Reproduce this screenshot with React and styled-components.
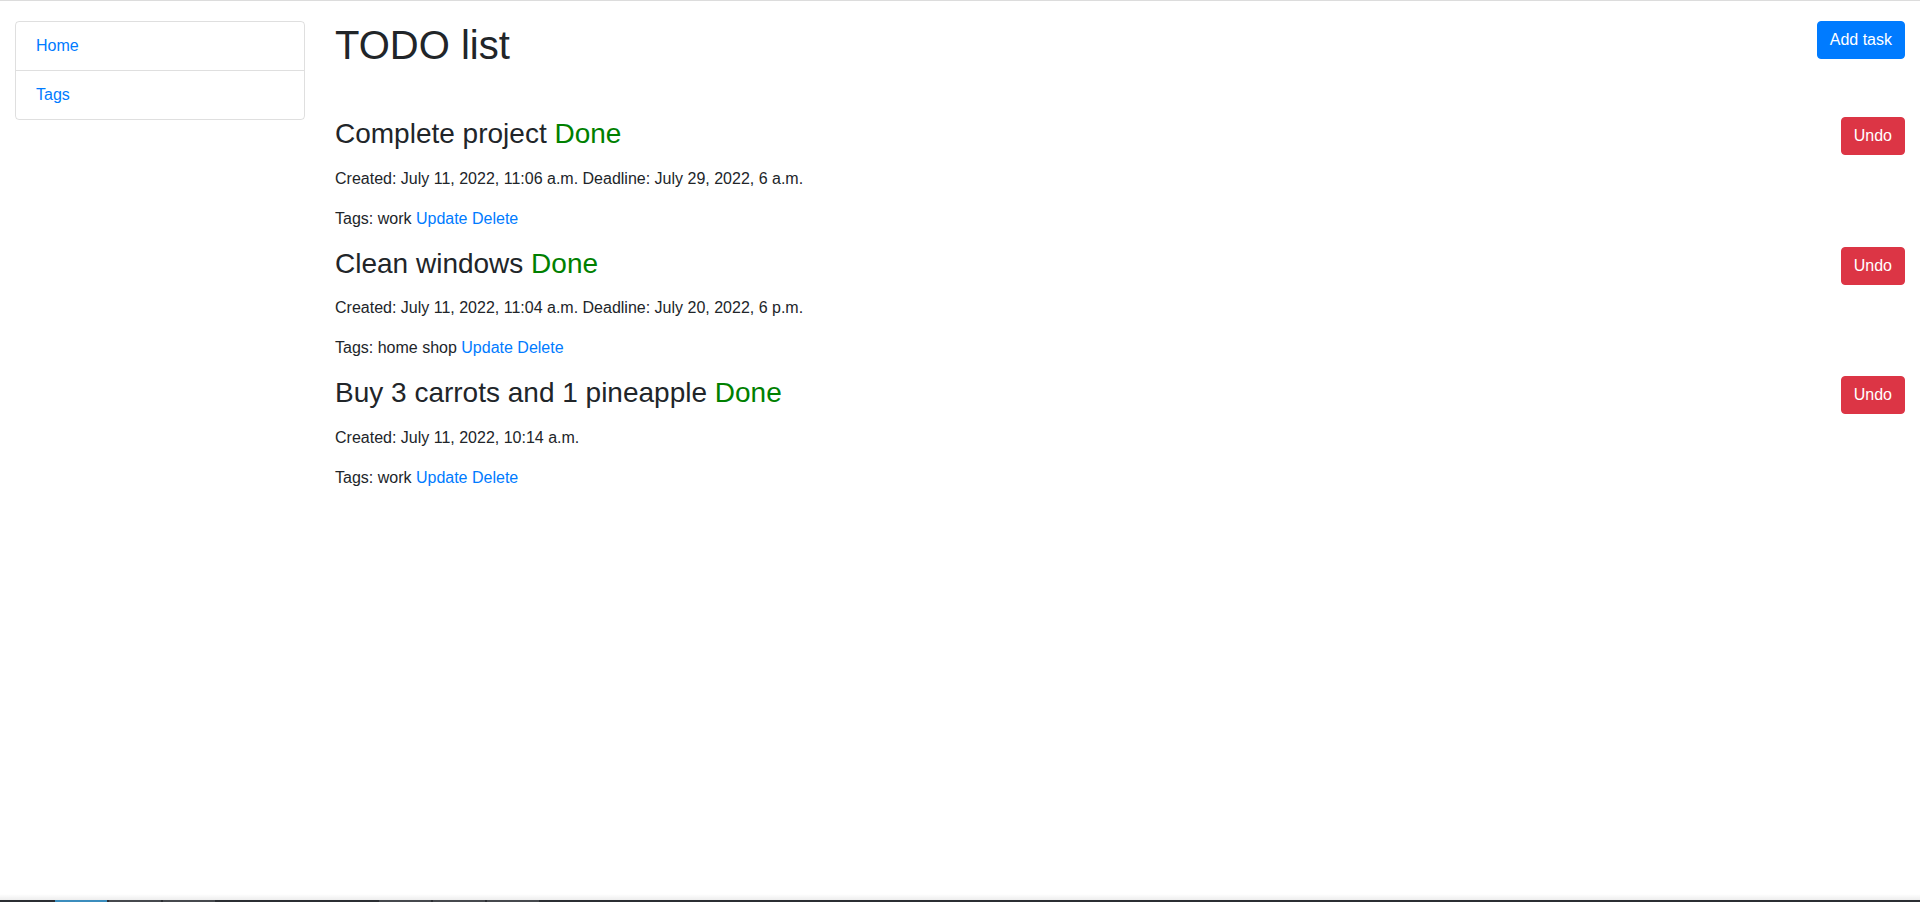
import React from 'react';
import styled, {createGlobalStyle} from 'styled-components';

const tasks = [
    {
        id: 1,
        title: 'Complete project',
        created: 'July 11, 2022, 11:06 a.m.',
        deadline: 'July 29, 2022, 6 a.m.',
        tags: 'work',
    },
    {
        id: 2,
        title: 'Clean windows',
        created: 'July 11, 2022, 11:04 a.m.',
        deadline: 'July 20, 2022, 6 p.m.',
        tags: 'home shop',
    },
    {
        id: 3,
        title: 'Buy 3 carrots and 1 pineapple',
        created: 'July 11, 2022, 10:14 a.m.',
        deadline: null,
        tags: 'work',
    },
];

function App() {
    return (
        <Page>
            <GlobalStyle/>
            <Main>
                <Sidebar>
                    <NavItem href="#">Home</NavItem>
                    <NavItem href="#">Tags</NavItem>
                </Sidebar>
                <Content>
                    <Header>
                        <Title>TODO list</Title>
                        <Button variant="primary">Add task</Button>
                    </Header>
                    {tasks.map(task => (
                        <Task key={task.id}>
                            <TaskHead>
                                <TaskTitle>
                                    {task.title} <Status>Done</Status>
                                </TaskTitle>
                                <Button variant="danger">Undo</Button>
                            </TaskHead>
                            <Meta>
                                Created: {task.created}
                                {task.deadline && <> Deadline: {task.deadline}</>}
                            </Meta>
                            <Meta>
                                Tags: {task.tags} <Link href="#">Update</Link> <Link href="#">Delete</Link>
                            </Meta>
                        </Task>
                    ))}
                </Content>
            </Main>
            <Taskbar>
                <Shade/>
                <Bar>
                    <Slot active/>
                    <Slot/>
                    <Slot/>
                    <Gap/>
                    <Slot/>
                    <Slot/>
                    <Slot/>
                </Bar>
            </Taskbar>
        </Page>
    );
}

const GlobalStyle = createGlobalStyle`
  body {
    margin: 0;
    font-family: "Liberation Sans", Arial, sans-serif;
    font-size: 16px;
    line-height: 1.5;
    color: #212529;
    background: #fff;
  }
`

const Page = styled.div`
  min-height: 100vh;
  box-sizing: border-box;
  display: flex;
  flex-direction: column;
  border-top: 1px solid #dcdcdc;
`

const Main = styled.div`
  flex: 1;
  display: grid;
  grid-template-columns: 290px 1fr;
  column-gap: 30px;
  align-items: start;
  padding: 20px 15px 0;
`

const Sidebar = styled.nav`
  display: flex;
  flex-direction: column;
  border: 1px solid rgba(0, 0, 0, .125);
  border-radius: 4px;
`

const NavItem = styled.a`
  display: block;
  padding: 12px 20px;
  color: #007bff;
  text-decoration: none;

  & + & {
    border-top: 1px solid rgba(0, 0, 0, .125);
  }
`

const Content = styled.main`
  display: flex;
  flex-direction: column;
`

const Header = styled.div`
  display: flex;
  justify-content: space-between;
  align-items: flex-start;
  margin-bottom: 40px;
`

const Title = styled.h1`
  margin: 0 0 8px;
  font-size: 40px;
  font-weight: 400;
  line-height: 1.2;
`

const Button = styled.button`
  flex-shrink: 0;
  padding: 6px 12px;
  font-family: inherit;
  font-size: 16px;
  line-height: 1.5;
  color: #fff;
  border-radius: 4px;
  cursor: pointer;
  background: ${p => p.variant === 'danger' ? '#dc3545' : '#007bff'};
  border: 1px solid ${p => p.variant === 'danger' ? '#dc3545' : '#007bff'};
`

const Task = styled.section`
  display: flex;
  flex-direction: column;
`

const TaskHead = styled.div`
  display: flex;
  justify-content: space-between;
  align-items: flex-start;
`

const TaskTitle = styled.h3`
  margin: 0 0 16px;
  font-size: 28px;
  font-weight: 400;
  line-height: 1.2;
`

const Status = styled.span`
  color: green;
`

const Meta = styled.p`
  margin: 0 0 16px;
`

const Link = styled.a`
  color: #007bff;
  text-decoration: none;
`

const Taskbar = styled.div`
  display: flex;
  flex-direction: column;
`

const Shade = styled.div`
  height: 6px;
  background: linear-gradient(to bottom, rgba(0, 0, 0, 0), rgba(0, 0, 0, .07));
`

const Bar = styled.div`
  height: 2px;
  display: flex;
  gap: 2px;
  padding-left: 55px;
  background: #2b2e33;
`

const Slot = styled.div`
  width: 52px;
  background: ${p => p.active ? '#3b8dbd' : '#46494e'};
`

const Gap = styled.div`
  width: 160px;
`

export default App;
